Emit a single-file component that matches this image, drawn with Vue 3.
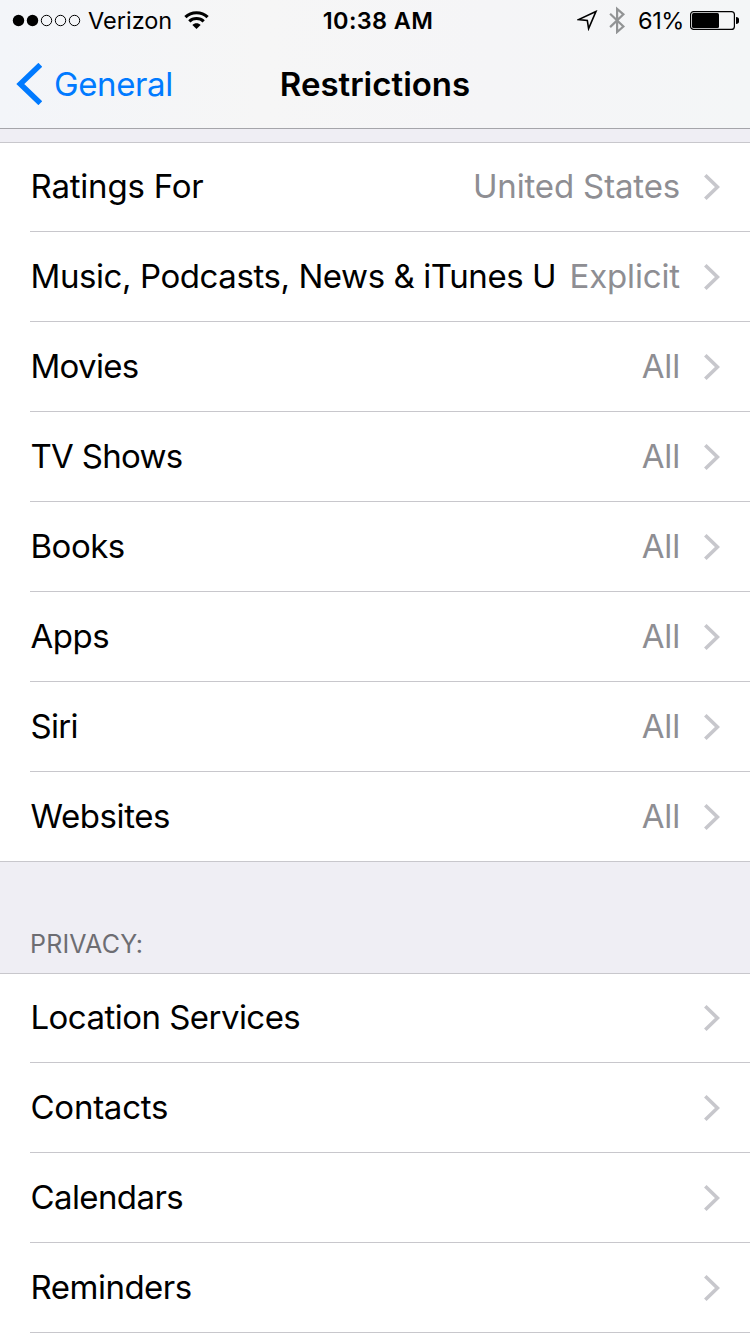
<script setup>
// tracking: letter-spacing of the label in px
const sections = [
    {
        title: '',
        rows: [
            { label: 'Ratings For', value: 'United States', tracking: -0.2 },
            { label: 'Music, Podcasts, News & iTunes U', value: 'Explicit', tracking: -0.42 },
            { label: 'Movies', value: 'All', tracking: -0.7 },
            { label: 'TV Shows', value: 'All', tracking: -0.7 },
            { label: 'Books', value: 'All', tracking: -0.5 },
            { label: 'Apps', value: 'All', tracking: -0.5 },
            { label: 'Siri', value: 'All', tracking: -0.7 },
            { label: 'Websites', value: 'All', tracking: -0.4 },
        ],
    },
    {
        title: 'PRIVACY:',
        continued: true,
        rows: [
            { label: 'Location Services', tracking: -0.54 },
            { label: 'Contacts', tracking: -0.25 },
            { label: 'Calendars', tracking: -0.6 },
            { label: 'Reminders', tracking: -0.5 },
        ],
    },
];
</script>

<template>
    <div class="screen">
        <header class="top">
            <div class="status-bar">
                <div class="status-left">
                    <svg class="signal" width="70" height="14" viewBox="0 0 70 14">
                        <circle cx="6.5" cy="7.5" r="5.7" />
                        <circle cx="20.5" cy="7.5" r="5.7" />
                        <circle class="empty" cx="34.5" cy="7.5" r="5.2" />
                        <circle class="empty" cx="48.5" cy="7.5" r="5.2" />
                        <circle class="empty" cx="62.5" cy="7.5" r="5.2" />
                    </svg>
                    <span class="carrier">Verizon</span>
                    <svg class="wifi" width="26" height="20" viewBox="0 0 26 20">
                        <path class="arc" d="M2.4 7.2 C8.4 1.2 18.6 1.2 24.6 7.2" />
                        <path class="arc" d="M6.3 11.4 C10.2 7.6 16.8 7.6 20.7 11.4" />
                        <path d="M13.5 19 L9.4 15 C11.4 12.6 15.6 12.6 17.6 15 Z" />
                    </svg>
                </div>
                <div class="clock">10:38 AM</div>
                <div class="status-right">
                    <svg class="location" width="21" height="21" viewBox="0 0 21 21">
                        <path d="M18.9 1.6 L1.6 9.6 L10.3 10.4 L11.6 18.6 Z" />
                    </svg>
                    <svg class="bluetooth" width="17" height="28" viewBox="0 0 17 28">
                        <path d="M1.1 7.7 L14.4 20.5 L8.1 26 V2.8 L14.4 8.3 L1.1 21.1" />
                    </svg>
                    <span class="percent">61%</span>
                    <svg class="battery" width="50" height="20" viewBox="0 0 50 20">
                        <rect class="shell" x=".6" y="1.6" width="43.8" height="17.8" rx="3" />
                        <rect x="2" y="3" width="27" height="15" rx="1.5" />
                        <path d="M46 7 C48 7.3 49 8.2 49 9 V12 C49 12.8 48 13.7 46 14 Z" />
                    </svg>
                </div>
            </div>
            <nav class="nav-bar">
                <a class="back">
                    <svg width="26" height="42" viewBox="0 0 26 42">
                        <path d="M24.3 1.8 L4.3 21 L24.3 40.2" />
                    </svg>
                    <span>General</span>
                </a>
                <h1 class="title">Restrictions</h1>
            </nav>
        </header>

        <main>
            <section v-for="(section, i) in sections" :key="i">
                <h2 class="section-title" :class="{ blank: !section.title }">{{ section.title }}</h2>
                <ul class="group" :class="{ continued: section.continued }">
                    <li v-for="row in section.rows" :key="row.label" class="row">
                        <span class="label" :style="{ letterSpacing: row.tracking + 'px' }">{{ row.label }}</span>
                        <span v-if="row.value" class="value">{{ row.value }}</span>
                        <svg class="chevron" width="16" height="26" viewBox="0 0 16 26">
                            <path d="M1.3 1.3 L13.4 13 L1.3 24.7" />
                        </svg>
                    </li>
                </ul>
            </section>
        </main>
    </div>
</template>

<style>
body {
    margin: 0;
}
</style>

<style scoped>
.screen {
    width: 750px;
    height: 1334px;
    overflow: hidden;
    background: #efeef4;
    color: #000;
    font-family: Inter, "Liberation Sans", sans-serif;
}

svg {
    display: block;
    flex: none;
}

.top {
    height: 128px;
    border-bottom: 1px solid #a5a5aa;
    background: linear-gradient(90deg, #f3f5f9 0%, #f6f6f6 35%, #f5f5f7 65%, #f4f6f7 100%);
}

.status-bar {
    display: grid;
    grid-template-columns: 1fr auto 1fr;
    align-items: center;
    height: 40px;
    padding: 0 10px 0 12px;
    font-size: 23.5px;
}

.status-left,
.status-right {
    display: flex;
    align-items: center;
}

.status-right {
    justify-content: flex-end;
}

.signal .empty {
    fill: none;
    stroke: #000;
    stroke-width: 1;
}

.carrier {
    margin-left: 6px;
    letter-spacing: 0;
}

.wifi {
    margin-left: 11px;
}

.wifi .arc {
    fill: none;
    stroke: #000;
    stroke-width: 3.1;
}

.clock {
    padding-left: 4px;
    font-weight: 600;
    letter-spacing: 0.35px;
}

.location {
    fill: none;
    stroke: #000;
    stroke-width: 1.6;
}

.bluetooth {
    margin-left: 11px;
    fill: none;
    stroke: #929495;
    stroke-width: 2.2;
}

.percent {
    margin-left: 12px;
    letter-spacing: -0.4px;
}

.battery {
    margin-left: 6px;
}

.battery .shell {
    fill: none;
    stroke: #000;
    stroke-width: 1.2;
}

.nav-bar {
    display: grid;
    grid-template-columns: 1fr auto 1fr;
    align-items: center;
    height: 88px;
    box-sizing: border-box;
    padding: 0 16px 0 16px;
}

.back {
    display: flex;
    align-items: center;
    gap: 12px;
    color: #007aff;
    font-size: 33px;
    letter-spacing: -0.4px;
}

.back path {
    fill: none;
    stroke: #007aff;
    stroke-width: 5.5;
}

.title {
    margin: 0;
    font-size: 33px;
    font-weight: 600;
}

.section-title {
    display: flex;
    align-items: flex-end;
    height: 111px;
    box-sizing: border-box;
    margin: 0;
    padding: 0 30px 13px;
    color: #6d6d72;
    font-size: 25px;
    font-weight: 400;
    letter-spacing: 0.2px;
    line-height: 32px;
}

.section-title.blank {
    height: 13px;
    padding: 0;
}

.group {
    margin: 0;
    padding: 0 0 0 30px;
    list-style: none;
    background: #fff;
    border-top: 1px solid #c8c7cc;
    border-bottom: 1px solid #c8c7cc;
}

.row {
    display: flex;
    align-items: center;
    height: 89px;
    padding-right: 30px;
    border-bottom: 1px solid #c8c7cc;
    font-size: 33px;
    white-space: nowrap;
}

.row:first-child {
    height: 88px;
}

.row:last-child {
    border-bottom: 0;
}

/* the list goes on below the screen edge */
.group.continued {
    padding-bottom: 10px;
}

.group.continued .row:last-child {
    border-bottom: 1px solid #c8c7cc;
}

.label,
.value {
    padding-bottom: 1px;
}

.label {
    padding-left: 0.5px;
}

.row:first-child .label,
.row:first-child .value {
    padding-bottom: 2px;
}

.value {
    margin-left: auto;
    color: #8e8e93;
    letter-spacing: -0.15px;
}

.chevron {
    margin-left: 24px;
}

.row .label + .chevron {
    margin-left: auto;
}

.chevron path {
    fill: none;
    stroke: #c7c7cc;
    stroke-width: 3.6;
}
</style>
